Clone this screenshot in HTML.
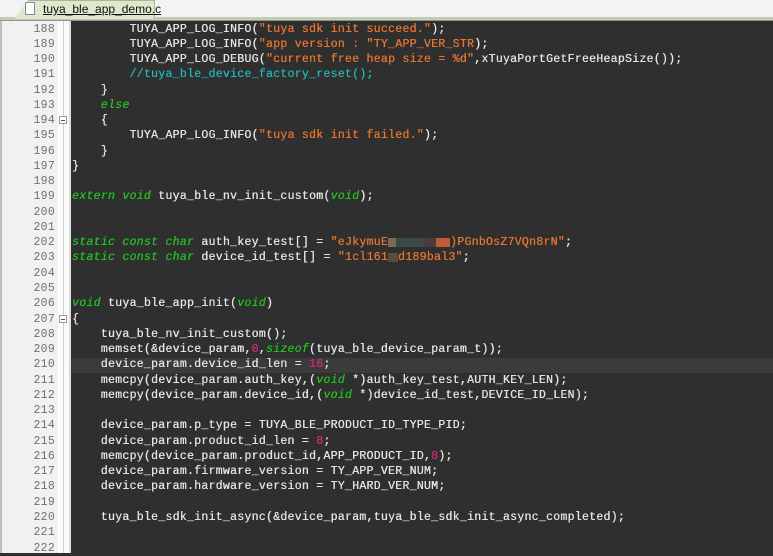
<!DOCTYPE html>
<html><head><meta charset="utf-8"><style>
html,body{margin:0;padding:0;width:773px;height:553px;overflow:hidden;background:#2f2f2f;font-family:"Liberation Mono",monospace}
#tabbar{position:absolute;left:0;top:0;width:773px;height:17px;background:#f3f3f3}
#tabline{position:absolute;left:0;top:17px;width:773px;height:3px;background:#c4cbb8;border-bottom:1px solid #8c9a80}
#tab{position:absolute;left:14px;top:0;width:139px;height:18px;background:#dfe8cf;border:1px solid #a9b894;border-bottom:none;clip-path:polygon(0 100%,14px 0,100% 0,100% 100%)}
#tabtxt{position:absolute;left:43px;top:2px;font-family:"Liberation Sans",sans-serif;font-size:12px;color:#111;text-decoration:underline}
#icon{position:absolute;left:25px;top:2px;width:8px;height:11px;background:#fff;border:1px solid #7a8aa0}
#gut{position:absolute;left:0;top:21px;width:58px;height:532px;background:#f1f1f1;border-left:2px solid #bfbfbf;box-sizing:border-box}
#fold{position:absolute;left:58px;top:21px;width:11px;height:532px;background:#fbfbfb}
#foldl{position:absolute;left:63px;top:21px;width:1px;height:532px;background:#cfcfcf}
#sep{position:absolute;left:69px;top:21px;width:2px;height:532px;background:#dcdcdc}
.box{position:absolute;left:59px;width:8px;height:8px;background:#fff;border:1px solid #999;box-sizing:border-box}
.box:after{content:"";position:absolute;left:1px;top:3px;width:4px;height:1px;background:#555}
#nums{position:absolute;left:0;top:21.5px;width:55px;text-align:right;font-size:11.5px;letter-spacing:0.25px;line-height:15.27px;color:#707070;white-space:pre}
#code{position:absolute;left:72px;top:21.5px;font-size:11.5px;letter-spacing:0.28px;line-height:15.27px;color:#e4e4e4;white-space:pre;text-shadow:0.3px 0 0 currentColor}
#hl{position:absolute;left:71px;top:357.5px;width:702px;height:15px;background:#3b3b3b}
.k{color:#22c022;font-style:italic}.s{color:#e6742e}.c{color:#24b4b4}.n{color:#d0287a}
.blur{display:inline-block;height:9px;vertical-align:middle}
</style></head><body>
<div id="tabbar"></div><div id="tabline"></div>
<div id="tab"></div><div id="icon"></div><div id="tabtxt">tuya_ble_app_demo.c</div>
<div id="gut"></div><div id="fold"></div><div id="foldl"></div><div id="sep"></div>
<div class="box" style="top:116px"></div>
<div class="box" style="top:315px"></div>
<div id="hl"></div>
<div id="nums">188
189
190
191
192
193
194
195
196
197
198
199
200
201
202
203
204
205
206
207
208
209
210
211
212
213
214
215
216
217
218
219
220
221
222</div>
<div id="code">        TUYA_APP_LOG_INFO(<span class="s">"tuya sdk init succeed."</span>);
        TUYA_APP_LOG_INFO(<span class="s">"app version : "TY_APP_VER_STR</span>);
        TUYA_APP_LOG_DEBUG(<span class="s">"current free heap size = %d"</span>,xTuyaPortGetFreeHeapSize());
        <span class="c">//tuya_ble_device_factory_reset();</span>
    }
    <span class="k">else</span>
    {
        TUYA_APP_LOG_INFO(<span class="s">"tuya sdk init failed."</span>);
    }
}

<span class="k">extern void</span> tuya_ble_nv_init_custom(<span class="k">void</span>);


<span class="k">static const char</span> auth_key_test[] = <span class="s">"eJkymuE<span class="blur" style="width:8px;background:#7a6a50"></span><span class="blur" style="width:28px;background:#3a4a4a"></span><span class="blur" style="width:12px;background:#4a3a3a"></span><span class="blur" style="width:14px;background:#c05a3a"></span>)PGnbOsZ7VQn8rN"</span>;
<span class="k">static const char</span> device_id_test[] = <span class="s">"1cl161<span class="blur" style="width:10px;background:#5a4a40"></span>d189bal3"</span>;


<span class="k">void</span> tuya_ble_app_init(<span class="k">void</span>)
{
    tuya_ble_nv_init_custom();
    memset(&amp;device_param,<span class="n">0</span>,<span class="k">sizeof</span>(tuya_ble_device_param_t));
    device_param.device_id_len = <span class="n">16</span>;
    memcpy(device_param.auth_key,(<span class="k">void</span> *)auth_key_test,AUTH_KEY_LEN);
    memcpy(device_param.device_id,(<span class="k">void</span> *)device_id_test,DEVICE_ID_LEN);

    device_param.p_type = TUYA_BLE_PRODUCT_ID_TYPE_PID;
    device_param.product_id_len = <span class="n">8</span>;
    memcpy(device_param.product_id,APP_PRODUCT_ID,<span class="n">8</span>);
    device_param.firmware_version = TY_APP_VER_NUM;
    device_param.hardware_version = TY_HARD_VER_NUM;

    tuya_ble_sdk_init_async(&amp;device_param,tuya_ble_sdk_init_async_completed);

</div>
</body></html>
